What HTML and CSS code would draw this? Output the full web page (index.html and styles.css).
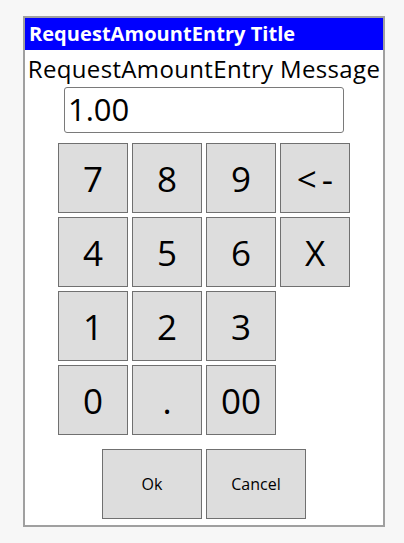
FILE: index.html
```html
<!DOCTYPE html>
<html>
<head>
<meta charset="utf-8">
<link rel="stylesheet" href="styles.css">
</head>
<body>
<div class="dialog">
  <div class="title">RequestAmountEntry Title</div>
  <div class="message">RequestAmountEntry Message</div>
  <div class="entry">1.00</div>
  <div class="keypad">
    <button class="key">7</button>
    <button class="key">8</button>
    <button class="key">9</button>
    <button class="key key-back">&lt;-</button>
    <button class="key">4</button>
    <button class="key">5</button>
    <button class="key">6</button>
    <button class="key">X</button>
    <button class="key">1</button>
    <button class="key">2</button>
    <button class="key">3</button>
    <span></span>
    <button class="key">0</button>
    <button class="key">.</button>
    <button class="key">00</button>
    <span></span>
  </div>
  <div class="actions">
    <button class="action">Ok</button>
    <button class="action">Cancel</button>
  </div>
</div>
</body>
</html>
```
FILE: styles.css
```css
html, body {
  margin: 0;
  padding: 0;
  background: #f7f7f7;
}
body {
  font-family: "Open Sans", "Noto Sans", sans-serif;
  padding: 16px 0 0 23px;
}
.dialog {
  box-sizing: border-box;
  width: 362px;
  height: 511px;
  border: 2px solid #a0a0a0;
  background: #ffffff;
  display: flex;
  flex-direction: column;
  align-items: center;
}
.title {
  align-self: stretch;
  height: 32px;
  background: #0000ff;
  color: #ffffff;
  font-weight: bold;
  font-size: 20px;
  line-height: 32px;
  padding-left: 4px;
  letter-spacing: 0.05px;
}
.message {
  font-size: 24px;
  line-height: 37px;
  color: #000;
  letter-spacing: 0.35px;
  white-space: nowrap;
}
.entry {
  box-sizing: border-box;
  width: 280px;
  height: 46px;
  border: 1px solid #7a7a7a;
  border-radius: 3px;
  font-size: 31px;
  line-height: 43px;
  padding-left: 3px;
  color: #000;
}
.keypad {
  margin-top: 10px;
  display: grid;
  grid-template-columns: repeat(4, 70px);
  grid-auto-rows: 70px;
  gap: 4px;
}
.key, .action {
  box-sizing: border-box;
  margin: 0;
  padding: 0;
  border: 1px solid #707070;
  background: #dddddd;
  color: #000;
  font-family: "Open Sans", "Noto Sans", sans-serif;
}
.key {
  width: 70px;
  height: 70px;
  font-size: 35px;
}
.key-back {
  letter-spacing: 5px;
  text-indent: 5px;
}
.actions {
  margin-top: 14px;
  display: flex;
  gap: 4px;
}
.action {
  width: 100px;
  height: 70px;
  font-size: 16px;
}
```
